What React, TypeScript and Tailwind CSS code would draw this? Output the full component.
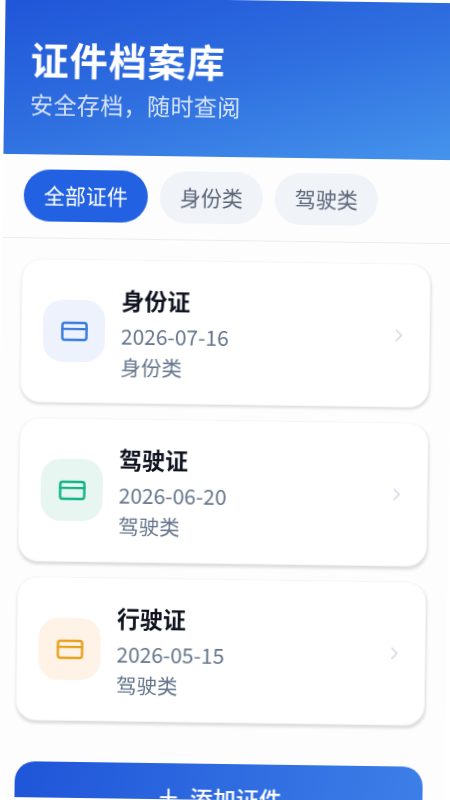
import React from "react";
import { ChevronRight, CreditCard, Plus } from "lucide-react";

const font = "font-['Noto_Sans_CJK_SC','Noto_Sans',sans-serif]";

type Card = { name: string; date: string; cat: string; bg: string; fg: string };
const cards: Card[] = [
  { name: "身份证", date: "2026-07-16", cat: "身份类", bg: "bg-[#edf2fd]", fg: "text-[#3b7ddd]" },
  { name: "驾驶证", date: "2026-06-20", cat: "驾驶类", bg: "bg-[#e7f6f1]", fg: "text-[#10b585]" },
  { name: "行驶证", date: "2026-05-15", cat: "驾驶类", bg: "bg-[#fef3e6]", fg: "text-[#e8a020]" },
];

export default function App() {
  return (
    <div className="w-[450px] h-[800px] overflow-hidden bg-white">
      <div className={`w-[450px] h-[800px] overflow-hidden bg-[#fdfdfe] rotate-[0.8deg] blur-[0.35px] flex flex-col ${font}`}>
        <header className="h-[157px] shrink-0 pl-[26px] pt-[36px] bg-[linear-gradient(165deg,#1f55d8_0%,#2f6fe0_50%,#4594ec_100%)]">
          <h1 className="text-[38px] leading-[50px] font-bold text-white tracking-[1px]">证件档案库</h1>
          <p className="mt-[4px] text-[23px] leading-[32px] text-white/80 tracking-[0.4px]">安全存档，随时查阅</p>
        </header>

        <nav className="h-[84px] shrink-0 flex items-center gap-[12px] pl-[21px] pb-[2px] border-b border-[#ececf0]">
          <button className="h-[52px] px-[20px] rounded-[26px] bg-[#2261e2] text-white text-[21px]">全部证件</button>
          <button className="h-[52px] px-[20px] rounded-[26px] bg-[#f0f3f8] text-[#5b6678] text-[21px]">身份类</button>
          <button className="h-[52px] px-[20px] rounded-[26px] bg-[#f0f3f8] text-[#5b6678] text-[21px]">驾驶类</button>
        </nav>

        <main className="flex flex-col gap-[15px] pl-5 pr-[21px] pt-[20px]">
          {cards.map((c) => (
            <div
              key={c.name}
              className="h-[144px] flex items-center pl-[21px] pr-[20px] bg-white rounded-[20px] border border-[#f6f6f8] shadow-[0_2px_3px_rgba(0,0,0,0.13)]"
            >
              <div className={`w-[62px] h-[62px] shrink-0 rounded-[20px] flex items-center justify-center ${c.bg} ${c.fg}`}>
                <CreditCard size={29} strokeWidth={2} />
              </div>
              <div className="ml-[16px] flex-1 flex flex-col pb-[1px]">
                <div className="text-[23px] leading-[34px] font-semibold text-[#0f1420]">{c.name}</div>
                <div className="text-[21px] leading-[34px] text-[#64748b] mt-[2px]">{c.date}</div>
                <div className="text-[20.5px] leading-[28px] text-[#64748b]">{c.cat}</div>
              </div>
              <ChevronRight size={20} strokeWidth={2} className="text-[#d3d8e3]" />
            </div>
          ))}
        </main>

        <div className="pl-5 pr-[22px] pt-[41px]">
          <button className="w-full h-[68px] rounded-[20px] bg-[linear-gradient(100deg,#1f55d8_0%,#3d7fe8_100%)] text-white flex items-center justify-center gap-[9px] text-[23px] font-medium">
            <Plus size={26} strokeWidth={2} />
            <span>添加证件</span>
          </button>
        </div>
      </div>
    </div>
  );
}
